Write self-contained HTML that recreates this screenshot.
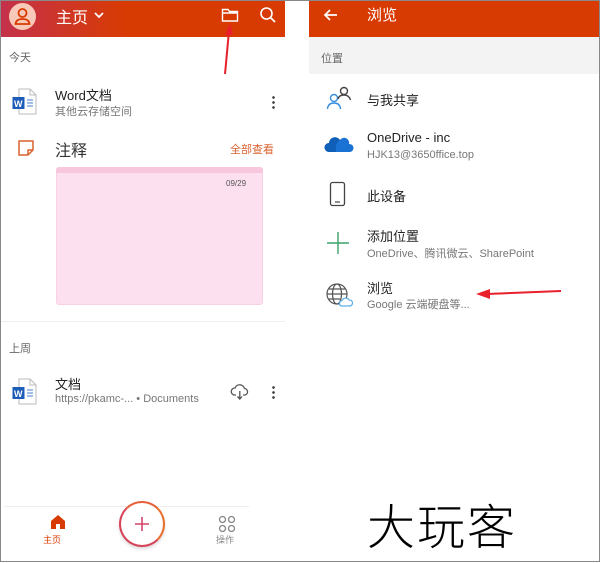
<!DOCTYPE html>
<html><head><meta charset="utf-8"><style>
*{margin:0;padding:0;box-sizing:border-box}
body{width:600px;height:562px;background:#fff;position:relative;overflow:hidden;font-family:"Liberation Sans","Noto Sans CJK SC",sans-serif;border:1px solid #888}
.a{position:absolute;white-space:nowrap}
.t{font-size:13px;color:#222}
.s{font-size:11px;color:#777}
</style></head><body>
<div class="a" style="left:0;top:0;width:284px;height:36px;background:linear-gradient(90deg,#c4314b,#d83b01 45%,#d83b01)"></div>
<div class="a" style="left:8px;top:2px;width:27px;height:27px;border-radius:50%;background:#f8c9b8"></div>
<svg class="a" style="left:8px;top:2px" width="27" height="27"><circle cx="13.5" cy="10" r="4" fill="none" stroke="#d83b01" stroke-width="1.8"/><path d="M6.5 21 Q7 16 13.5 16 Q20 16 20.5 21 Z" fill="none" stroke="#d83b01" stroke-width="1.8"/></svg>
<div class="a" style="left:55px;top:3px;font-size:16px;color:#fff">主页</div>
<svg class="a" style="left:92px;top:9px" width="12" height="10"><path d="M2 3 L6 7 L10 3" fill="none" stroke="#fff" stroke-width="1.8"/></svg>
<svg class="a" style="left:220px;top:6px" width="18" height="16"><path d="M1.5 2.5 H7 L8.5 4.5 H16.5 V14 H1.5 Z M1.5 6 H16.5" fill="none" stroke="#fff" stroke-width="1.4"/></svg>
<svg class="a" style="left:258px;top:5px" width="18" height="18"><circle cx="7.5" cy="7.5" r="5.5" fill="none" stroke="#fff" stroke-width="1.6"/><path d="M11.5 11.5 L16 16" stroke="#fff" stroke-width="1.8"/></svg>
<div class="a s" style="left:8px;top:48px;color:#666">今天</div>
<svg class="a" style="left:10px;top:86px" width="30" height="30"><path d="M8 2 H19 L25 8 V27 H8 Z" fill="#fff" stroke="#bbb"/><path d="M19 2 V8 H25" fill="none" stroke="#bbb"/><rect x="1.5" y="10" width="12" height="12" fill="#1d5cb8"/><text x="3" y="20" font-size="9" fill="#fff" font-weight="bold" font-family="Liberation Sans">W</text><path d="M16 13 H22 M16 16 H22 M16 19 H22" stroke="#6b9ad6" stroke-width="1.3"/></svg>
<div class="a t" style="left:54px;top:84px;font-size:13px">Word文档</div>
<div class="a s" style="left:54px;top:102px">其他云存储空间</div>
<div class="a" style="left:271px;top:94px;width:3px;height:14px;background:radial-gradient(circle,#444 1.2px,transparent 1.5px) 0 0/3px 5px"></div>
<svg class="a" style="left:15px;top:137px" width="20" height="20"><path d="M3 3 H17 V12 L12 17 H3 Z M12 17 V12 H17" fill="none" stroke="#d9622e" stroke-width="1.5" stroke-linejoin="round"/></svg>
<div class="a" style="left:54px;top:136px;font-size:16px;color:#333">注释</div>
<div class="a" style="left:229px;top:140px;font-size:11px;color:#d9622e">全部查看</div>
<div class="a" style="left:55px;top:166px;width:207px;height:138px;background:#fde0ef;border-radius:3px;border:1px solid #f8d2e4"></div>
<div class="a" style="left:55px;top:166px;width:207px;height:6px;background:#f8c7dd;border-radius:3px 3px 0 0"></div>
<div class="a" style="left:225px;top:178px;font-size:8px;color:#555">09/29</div>
<div class="a" style="left:0;top:320px;width:284px;height:1px;background:#eee"></div>
<div class="a s" style="left:8px;top:339px;color:#666">上周</div>
<svg class="a" style="left:10px;top:376px" width="30" height="30"><path d="M8 2 H19 L25 8 V27 H8 Z" fill="#fff" stroke="#bbb"/><path d="M19 2 V8 H25" fill="none" stroke="#bbb"/><rect x="1.5" y="10" width="12" height="12" fill="#1d5cb8"/><text x="3" y="20" font-size="9" fill="#fff" font-weight="bold" font-family="Liberation Sans">W</text><path d="M16 13 H22 M16 16 H22 M16 19 H22" stroke="#6b9ad6" stroke-width="1.3"/></svg>
<div class="a t" style="left:54px;top:373px">文档</div>
<div class="a s" style="left:54px;top:392px">https://pkamc-... • Documents</div>
<svg class="a" style="left:229px;top:382px" width="20" height="18"><path d="M6 12 H4.5 A3.5 3.5 0 0 1 5 5 A5 5 0 0 1 14.5 5.5 A3.3 3.3 0 0 1 15 12 H13 M9.8 8 V16 M7.5 13.5 L9.8 16 L12 13.5" fill="none" stroke="#555" stroke-width="1.3"/></svg>
<div class="a" style="left:271px;top:384px;width:3px;height:14px;background:radial-gradient(circle,#444 1.2px,transparent 1.5px) 0 0/3px 5px"></div>
<div class="a" style="left:3px;top:505px;width:245px;height:1px;background:#eee"></div>
<svg class="a" style="left:49px;top:513px" width="16" height="16"><path d="M1 7 L8 1 L15 7 V15 H10 V10 H6 V15 H1 Z" fill="#d83b01"/></svg>
<div class="a" style="left:42px;top:532px;font-size:9px;color:#d83b01">主页</div>
<div class="a" style="left:118px;top:500px;width:46px;height:46px;border-radius:50%;border:2px solid #d9435a;border-right-color:#e8702e;border-top-color:#e85f3a;background:#fff;box-shadow:0 2px 3px rgba(0,0,0,.15)"></div>
<svg class="a" style="left:133px;top:515px" width="16" height="16"><path d="M8 1 V15 M1 8 H15" stroke="#d4456a" stroke-width="1.6"/></svg>
<svg class="a" style="left:217px;top:514px" width="18" height="18"><g fill="none" stroke="#888" stroke-width="1.3"><circle cx="4.5" cy="4.5" r="3"/><circle cx="13.5" cy="4.5" r="3"/><circle cx="4.5" cy="13.5" r="3"/><circle cx="13.5" cy="13.5" r="3"/></g></svg>
<div class="a" style="left:215px;top:532px;font-size:9px;color:#888">操作</div>
<div class="a" style="left:308px;top:0;width:290px;height:36px;background:#d83b01"></div>
<svg class="a" style="left:322px;top:6px" width="16" height="16"><path d="M14 8 H2 M7 3 L2 8 L7 13" fill="none" stroke="#fff" stroke-width="1.7"/></svg>
<div class="a" style="left:366px;top:3px;font-size:15px;color:#fff">浏览</div>
<div class="a" style="left:308px;top:36px;width:290px;height:37px;background:#f3f3f3"></div>
<div class="a s" style="left:320px;top:49px;color:#666">位置</div>
<svg class="a" style="left:324px;top:84px" width="28" height="26"><g fill="none" stroke-width="1.4"><circle cx="9" cy="13" r="3.5" stroke="#3a8ee0"/><path d="M2.5 24 Q3 18 9 18 Q15 18 15.5 24" stroke="#3a8ee0"/><circle cx="19" cy="6" r="3.5" stroke="#444"/><path d="M13 14 Q14 10 19 10 Q24 10 25.5 15" stroke="#444"/></g></svg>
<div class="a t" style="left:366px;top:89px">与我共享</div>
<svg class="a" style="left:323px;top:134px" width="30" height="20"><path d="M5 17 A4.5 4.5 0 0 1 5 8 A6 6 0 0 1 16 5 A5 5 0 0 1 25 9 A4 4 0 0 1 26 17 Z" fill="#1a73d4"/><path d="M5 17 A4.5 4.5 0 0 1 5 8 A6 6 0 0 1 16 5 Q11 8 12 17Z" fill="#0f5fb8"/></svg>
<div class="a t" style="left:366px;top:129px">OneDrive - inc</div>
<div class="a s" style="left:366px;top:148px">HJK13@3650ffice.top</div>
<svg class="a" style="left:328px;top:180px" width="18" height="27"><rect x="1.5" y="1.5" width="14" height="23" rx="2" fill="none" stroke="#444" stroke-width="1.3"/><path d="M6 21 H11" stroke="#444" stroke-width="1.2"/></svg>
<div class="a t" style="left:366px;top:185px">此设备</div>
<svg class="a" style="left:325px;top:230px" width="24" height="24"><path d="M12 1 V23 M1 12 H23" stroke="#3aa36a" stroke-width="1.4"/></svg>
<div class="a t" style="left:366px;top:225px">添加位置</div>
<div class="a s" style="left:366px;top:244px">OneDrive、腾讯微云、SharePoint</div>
<svg class="a" style="left:324px;top:281px" width="28" height="26"><g fill="none" stroke="#555" stroke-width="1.2"><circle cx="12" cy="12" r="10"/><ellipse cx="12" cy="12" rx="4.5" ry="10"/><path d="M2 12 H22 M4 7 H20 M4 17 H15"/></g><path d="M16 24 A3 3 0 0 1 17 18.5 A4 4 0 0 1 24 18 A3 3 0 0 1 25 24 Z" fill="#fff" stroke="#5aaee8" stroke-width="1.2"/></svg>
<div class="a t" style="left:366px;top:277px">浏览</div>
<div class="a s" style="left:366px;top:295px">Google 云端硬盘等...</div>
<svg class="a" style="left:0;top:0" width="600" height="562"><path d="M224 73 L228 30" stroke="#e8202a" stroke-width="2"/><path d="M229 22 L224 34 L232 34 Z" fill="#e8202a"/><path d="M560 290 L486 293" stroke="#e8202a" stroke-width="2"/><path d="M475 293 L489 288 L489 298 Z" fill="#e8202a"/></svg>
<div class="a" style="left:366px;top:494px;font-size:48px;color:#000;font-family:'Noto Sans CJK SC',sans-serif;font-weight:300;letter-spacing:2px;line-height:56px">大玩客</div>
</body></html>
